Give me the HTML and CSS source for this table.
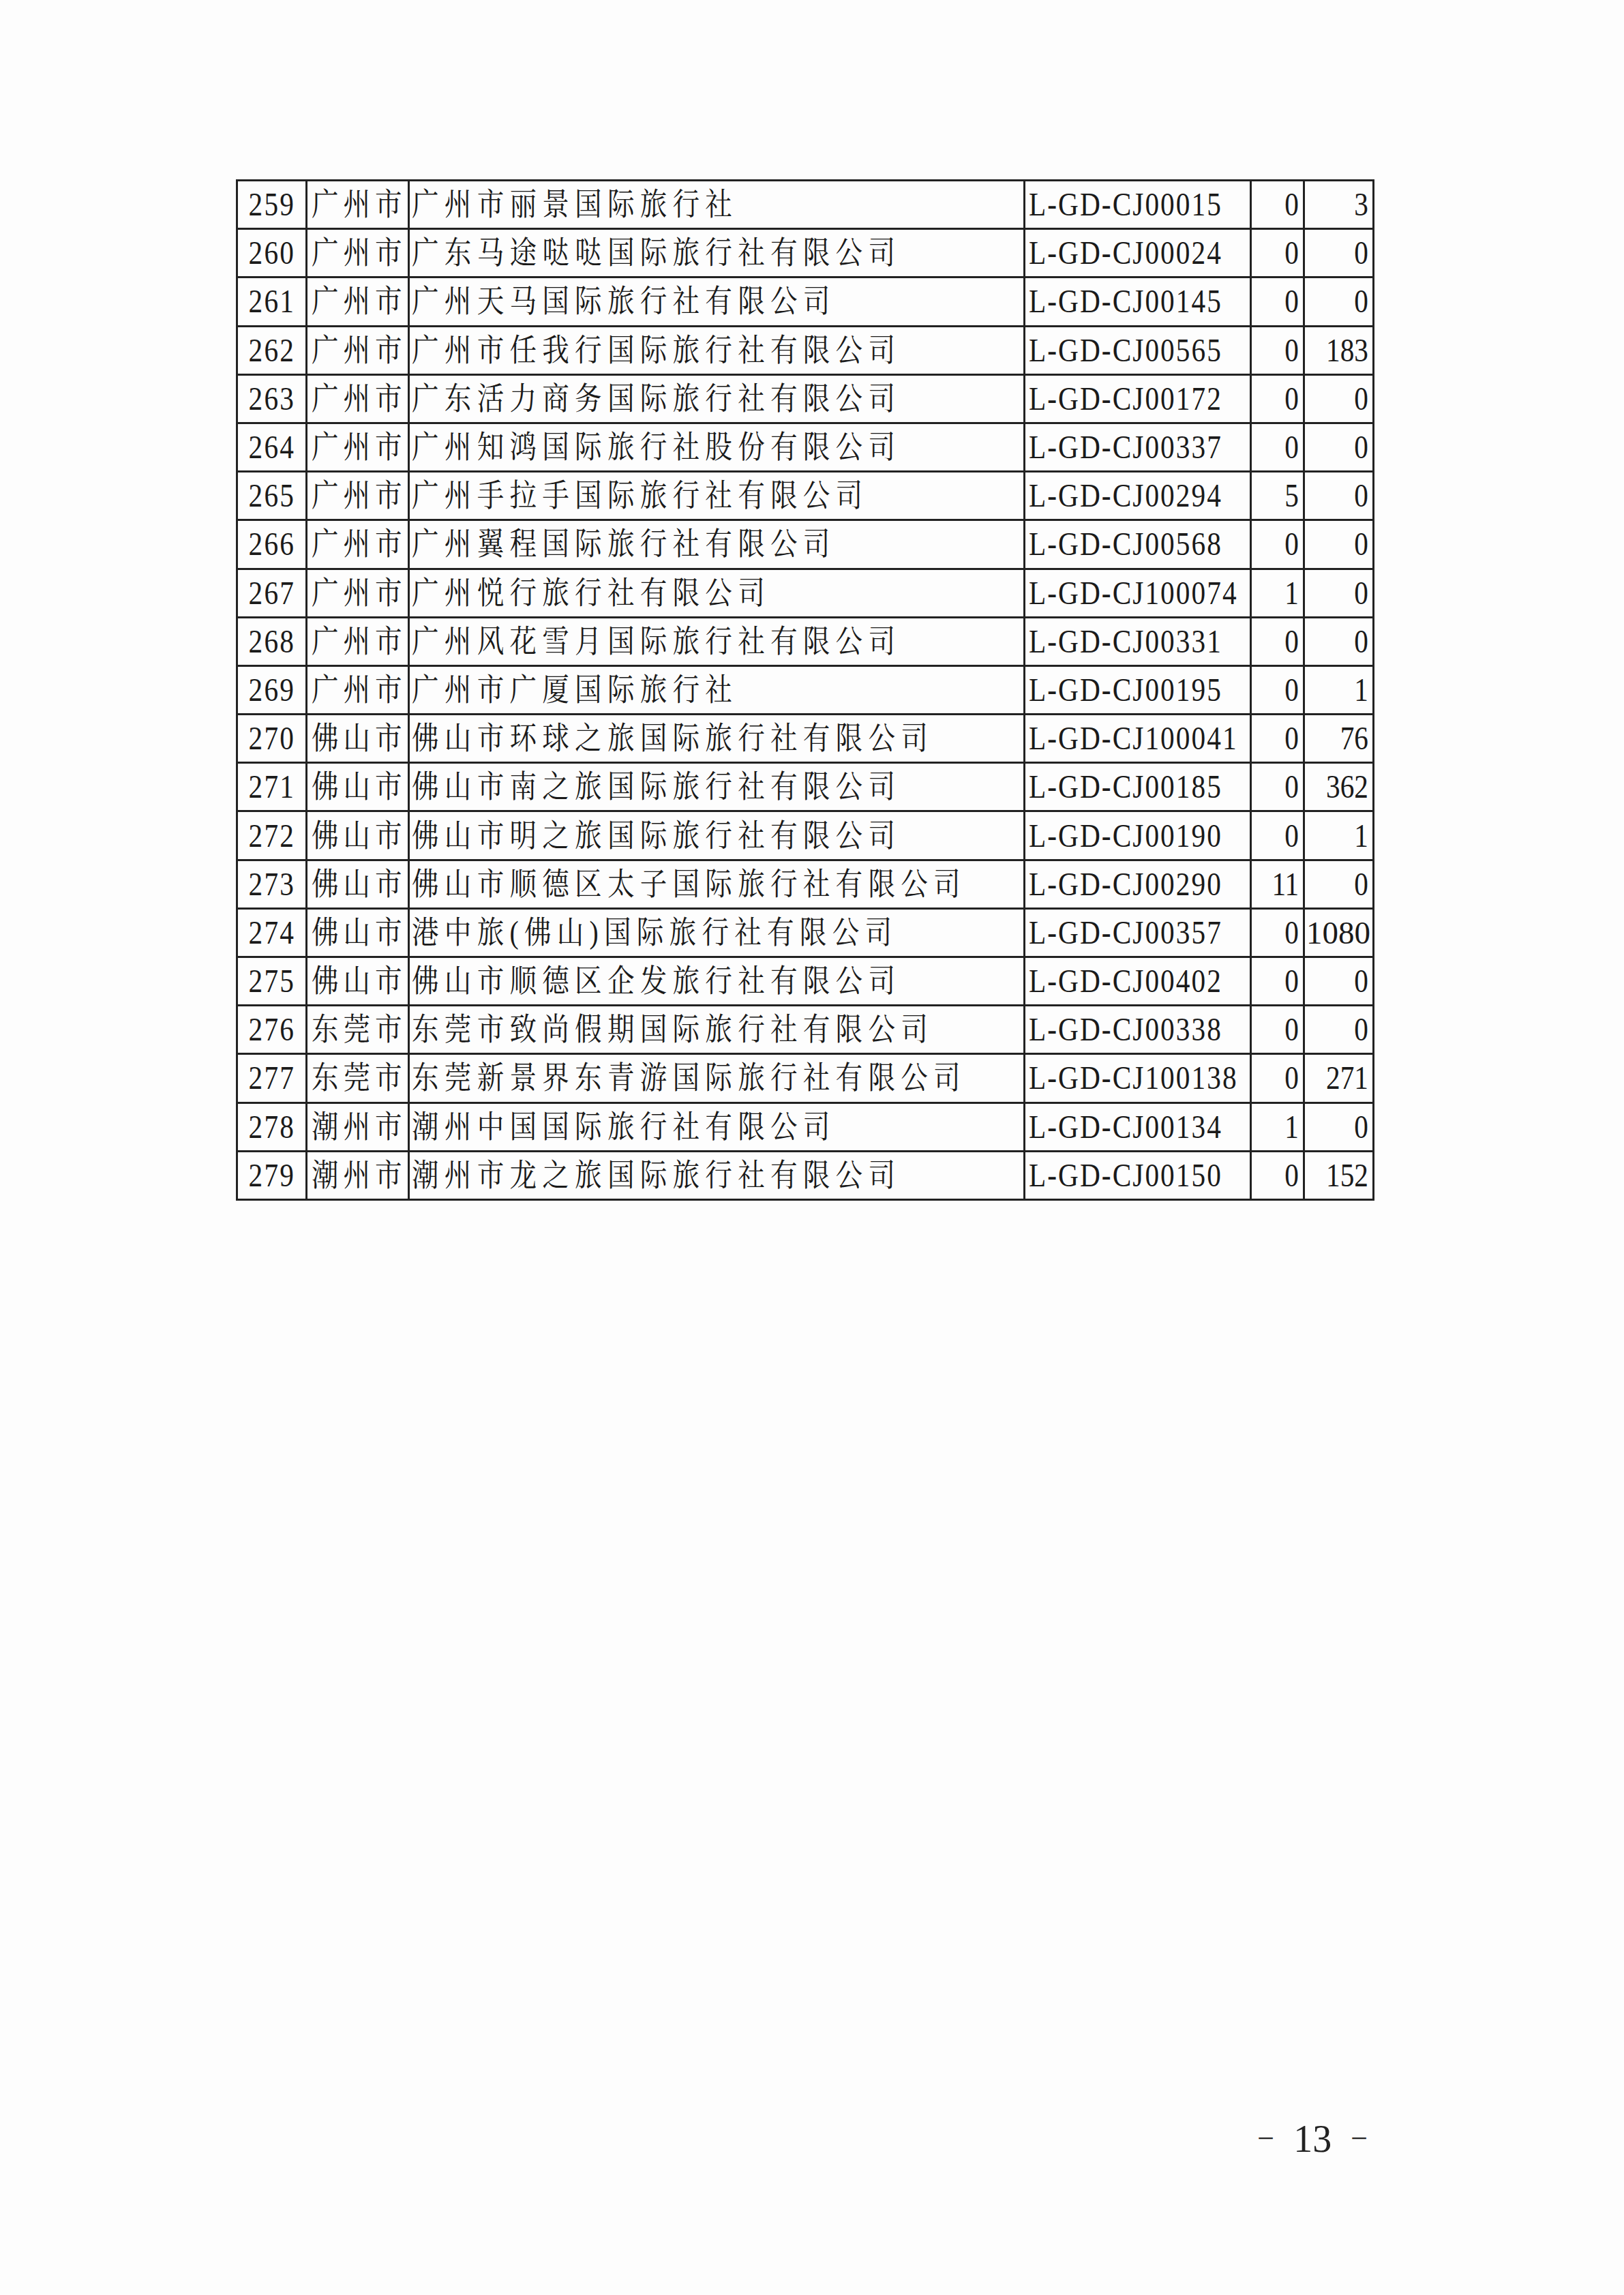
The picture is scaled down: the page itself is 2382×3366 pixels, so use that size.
FILE: index.html
```html
<!DOCTYPE html>
<html lang="zh-CN">
<head>
<meta charset="utf-8">
<title>13</title>
<link rel="stylesheet" href="styles.css">
</head>
<body>
<div class="page">
  <table class="list">
    <colgroup>
      <col class="c-no"><col class="c-city"><col class="c-name"><col class="c-code"><col class="c-a"><col class="c-b">
    </colgroup>
    <tbody>
      <tr><td class="no"><span>259</span></td><td class="city"><span>广州市</span></td><td class="name"><span>广州市丽景国际旅行社</span></td><td class="code"><span>L-GD-CJ00015</span></td><td class="num"><span>0</span></td><td class="num"><span>3</span></td></tr>
      <tr><td class="no"><span>260</span></td><td class="city"><span>广州市</span></td><td class="name"><span>广东马途哒哒国际旅行社有限公司</span></td><td class="code"><span>L-GD-CJ00024</span></td><td class="num"><span>0</span></td><td class="num"><span>0</span></td></tr>
      <tr><td class="no"><span>261</span></td><td class="city"><span>广州市</span></td><td class="name"><span>广州天马国际旅行社有限公司</span></td><td class="code"><span>L-GD-CJ00145</span></td><td class="num"><span>0</span></td><td class="num"><span>0</span></td></tr>
      <tr><td class="no"><span>262</span></td><td class="city"><span>广州市</span></td><td class="name"><span>广州市任我行国际旅行社有限公司</span></td><td class="code"><span>L-GD-CJ00565</span></td><td class="num"><span>0</span></td><td class="num"><span>183</span></td></tr>
      <tr><td class="no"><span>263</span></td><td class="city"><span>广州市</span></td><td class="name"><span>广东活力商务国际旅行社有限公司</span></td><td class="code"><span>L-GD-CJ00172</span></td><td class="num"><span>0</span></td><td class="num"><span>0</span></td></tr>
      <tr><td class="no"><span>264</span></td><td class="city"><span>广州市</span></td><td class="name"><span>广州知鸿国际旅行社股份有限公司</span></td><td class="code"><span>L-GD-CJ00337</span></td><td class="num"><span>0</span></td><td class="num"><span>0</span></td></tr>
      <tr><td class="no"><span>265</span></td><td class="city"><span>广州市</span></td><td class="name"><span>广州手拉手国际旅行社有限公司</span></td><td class="code"><span>L-GD-CJ00294</span></td><td class="num"><span>5</span></td><td class="num"><span>0</span></td></tr>
      <tr><td class="no"><span>266</span></td><td class="city"><span>广州市</span></td><td class="name"><span>广州翼程国际旅行社有限公司</span></td><td class="code"><span>L-GD-CJ00568</span></td><td class="num"><span>0</span></td><td class="num"><span>0</span></td></tr>
      <tr><td class="no"><span>267</span></td><td class="city"><span>广州市</span></td><td class="name"><span>广州悦行旅行社有限公司</span></td><td class="code"><span>L-GD-CJ100074</span></td><td class="num"><span>1</span></td><td class="num"><span>0</span></td></tr>
      <tr><td class="no"><span>268</span></td><td class="city"><span>广州市</span></td><td class="name"><span>广州风花雪月国际旅行社有限公司</span></td><td class="code"><span>L-GD-CJ00331</span></td><td class="num"><span>0</span></td><td class="num"><span>0</span></td></tr>
      <tr><td class="no"><span>269</span></td><td class="city"><span>广州市</span></td><td class="name"><span>广州市广厦国际旅行社</span></td><td class="code"><span>L-GD-CJ00195</span></td><td class="num"><span>0</span></td><td class="num"><span>1</span></td></tr>
      <tr><td class="no"><span>270</span></td><td class="city"><span>佛山市</span></td><td class="name"><span>佛山市环球之旅国际旅行社有限公司</span></td><td class="code"><span>L-GD-CJ100041</span></td><td class="num"><span>0</span></td><td class="num"><span>76</span></td></tr>
      <tr><td class="no"><span>271</span></td><td class="city"><span>佛山市</span></td><td class="name"><span>佛山市南之旅国际旅行社有限公司</span></td><td class="code"><span>L-GD-CJ00185</span></td><td class="num"><span>0</span></td><td class="num"><span>362</span></td></tr>
      <tr><td class="no"><span>272</span></td><td class="city"><span>佛山市</span></td><td class="name"><span>佛山市明之旅国际旅行社有限公司</span></td><td class="code"><span>L-GD-CJ00190</span></td><td class="num"><span>0</span></td><td class="num"><span>1</span></td></tr>
      <tr><td class="no"><span>273</span></td><td class="city"><span>佛山市</span></td><td class="name"><span>佛山市顺德区太子国际旅行社有限公司</span></td><td class="code"><span>L-GD-CJ00290</span></td><td class="num"><span>11</span></td><td class="num"><span>0</span></td></tr>
      <tr><td class="no"><span>274</span></td><td class="city"><span>佛山市</span></td><td class="name"><span>港中旅(佛山)国际旅行社有限公司</span></td><td class="code"><span>L-GD-CJ00357</span></td><td class="num"><span>0</span></td><td class="num tight"><span>1080</span></td></tr>
      <tr><td class="no"><span>275</span></td><td class="city"><span>佛山市</span></td><td class="name"><span>佛山市顺德区企发旅行社有限公司</span></td><td class="code"><span>L-GD-CJ00402</span></td><td class="num"><span>0</span></td><td class="num"><span>0</span></td></tr>
      <tr><td class="no"><span>276</span></td><td class="city"><span>东莞市</span></td><td class="name"><span>东莞市致尚假期国际旅行社有限公司</span></td><td class="code"><span>L-GD-CJ00338</span></td><td class="num"><span>0</span></td><td class="num"><span>0</span></td></tr>
      <tr><td class="no"><span>277</span></td><td class="city"><span>东莞市</span></td><td class="name"><span>东莞新景界东青游国际旅行社有限公司</span></td><td class="code"><span>L-GD-CJ100138</span></td><td class="num"><span>0</span></td><td class="num"><span>271</span></td></tr>
      <tr><td class="no"><span>278</span></td><td class="city"><span>潮州市</span></td><td class="name"><span>潮州中国国际旅行社有限公司</span></td><td class="code"><span>L-GD-CJ00134</span></td><td class="num"><span>1</span></td><td class="num"><span>0</span></td></tr>
      <tr><td class="no"><span>279</span></td><td class="city"><span>潮州市</span></td><td class="name"><span>潮州市龙之旅国际旅行社有限公司</span></td><td class="code"><span>L-GD-CJ00150</span></td><td class="num"><span>0</span></td><td class="num"><span>152</span></td></tr>
    </tbody>
  </table>
  <div class="folio"><span class="dash">−</span><span class="pn">13</span><span class="dash">−</span></div>
</div>
</body>
</html>
```

FILE: styles.css
```css
html, body {
  margin: 0;
  padding: 0;
  background: #fdfdfd;
}
.page {
  width: 2382px;
  height: 3366px;
  box-sizing: border-box;
  padding: 263px 0 0 346px;
  color: #1a1a1a;
  font-family: "Liberation Serif", "Noto Serif CJK SC", "Noto Sans CJK SC", serif;
}
.list {
  border-collapse: collapse;
  table-layout: fixed;
  width: 1667px;
}
.c-no { width: 102px; }
.c-city { width: 150px; }
.c-name { width: 903px; }
.c-code { width: 332px; }
.c-a { width: 78px; }
.c-b { width: 102px; }
.list tr {
  height: 71.2px;
}
.list td {
  border: 3px solid #222;
  padding: 0;
  font-size: 48px;
  line-height: 1;
  white-space: nowrap;
  overflow: hidden;
  vertical-align: middle;
}
.list td > span {
  display: inline-block;
  transform: scaleX(0.86);
  letter-spacing: 2.6px;
}
.no {
  text-align: center;
}
.no > span {
  transform-origin: center;
}
.city,
.name {
  font-size: 46px !important;
}
.city {
  text-align: left;
  padding-left: 6px !important;
}
.city > span {
  transform-origin: left center;
  letter-spacing: 8px !important;
}
.name {
  text-align: left;
  padding-left: 3px !important;
}
.name > span {
  transform-origin: left center;
  letter-spacing: 9.6px !important;
}
.code {
  text-align: left;
  padding-left: 5px !important;
}
.code > span {
  transform-origin: left center;
  letter-spacing: 2.4px !important;
}
.num {
  text-align: right;
  padding-right: 6px !important;
}
.num > span {
  transform-origin: right center;
  letter-spacing: 0 !important;
}
.num.tight {
  padding-right: 3px !important;
}
.num.tight > span {
  transform: none;
  font-size: 47px;
}
.folio {
  margin-top: 1346px;
  padding-right: 376px;
  display: flex;
  justify-content: flex-end;
  align-items: center;
  gap: 28px;
  font-size: 56px;
  line-height: 60px;
  color: #222;
}
.dash {
  font-size: 44px;
}
```
